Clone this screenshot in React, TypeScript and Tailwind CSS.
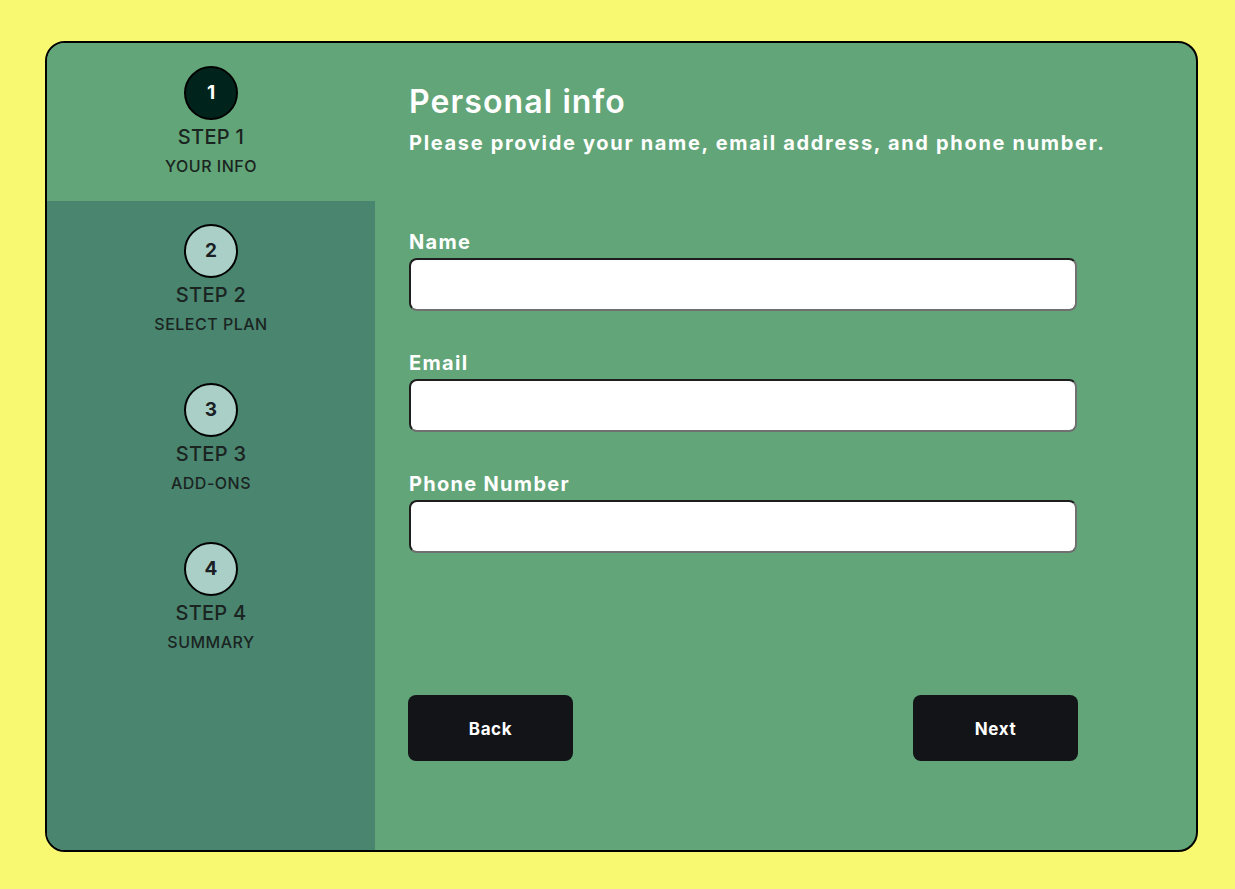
import React from "react"

const steps = [
  { n: 1, title: "STEP 1", sub: "YOUR INFO" },
  { n: 2, title: "STEP 2", sub: "SELECT PLAN" },
  { n: 3, title: "STEP 3", sub: "ADD-ONS" },
  { n: 4, title: "STEP 4", sub: "SUMMARY" },
]

const fields = ["Name", "Email", "Phone Number"]

export default function App() {
  const active = 1

  return (
    <div
      className="w-full h-screen bg-[#f9f871] pt-[41px] pl-[45px]"
      style={{ fontFamily: "Inter, 'Open Sans', sans-serif" }}
    >
      <div className="flex w-[1153px] h-[811px] border-2 border-black rounded-[20px] overflow-hidden bg-[#62a578]">
        <aside className="w-[328px] shrink-0 flex flex-col">
          {steps.map(step => {
            const isActive = step.n === active
            return (
              <div
                key={step.n}
                className={
                  isActive
                    ? "h-[158px] pt-[23px] flex flex-col items-center bg-[#62a578]"
                    : "h-[159px] pt-[23px] flex flex-col items-center bg-[#4a8570]"
                }
              >
                <div
                  className={
                    isActive
                      ? "w-[54px] h-[54px] rounded-full border-2 border-black bg-[#00241b] text-white flex items-center justify-center text-[19px] font-bold"
                      : "w-[54px] h-[54px] rounded-full border-2 border-black bg-[#a9cfc7] text-[#1b1f24] flex items-center justify-center text-[19px] font-bold"
                  }
                >
                  {step.n}
                </div>
                <div className="mt-[3px] text-[20px] leading-[28px] font-medium tracking-[0.3px] text-[#1a2420]">{step.title}</div>
                <div className="mt-[4px] text-[16px] leading-[22px] font-medium tracking-[0.5px] text-[#1a2420]">{step.sub}</div>
              </div>
            )
          })}
          <div className="flex-1 bg-[#4a8570]" />
        </aside>

        <main className="flex-1 pl-[34px] pt-[39px] flex flex-col">
          <h1 className="text-[32px] leading-[40px] font-semibold tracking-[1.1px] text-white">Personal info</h1>
          <p className="mt-[7px] text-[20px] leading-[28px] font-bold tracking-[1.68px] text-white">
            Please provide your name, email address, and phone number.
          </p>

          <form className="mt-[71px] flex flex-col gap-[38px] w-[668px]">
            {fields.map(label => (
              <label key={label} className="flex flex-col">
                <span className="text-[20px] leading-[28px] font-bold tracking-[1.3px] text-white">{label}</span>
                <input
                  className="mt-[2px] h-[53px] rounded-[8px] bg-white border-2 border-t-[#1e1e1e] border-l-[#1e1e1e] border-b-[#707070] border-r-[#707070] px-3 outline-none"
                />
              </label>
            ))}
          </form>

          <div className="mt-[142px] flex justify-between w-[670px] -ml-[1px]">
            <button className="w-[165px] h-[66px] pt-[3px] rounded-[8px] bg-[#121417] text-white text-[17px] font-bold tracking-[0.6px]">
              Back
            </button>
            <button className="w-[165px] h-[66px] pt-[3px] rounded-[8px] bg-[#121417] text-white text-[17px] font-bold tracking-[0.6px]">
              Next
            </button>
          </div>
        </main>
      </div>
    </div>
  )
}
